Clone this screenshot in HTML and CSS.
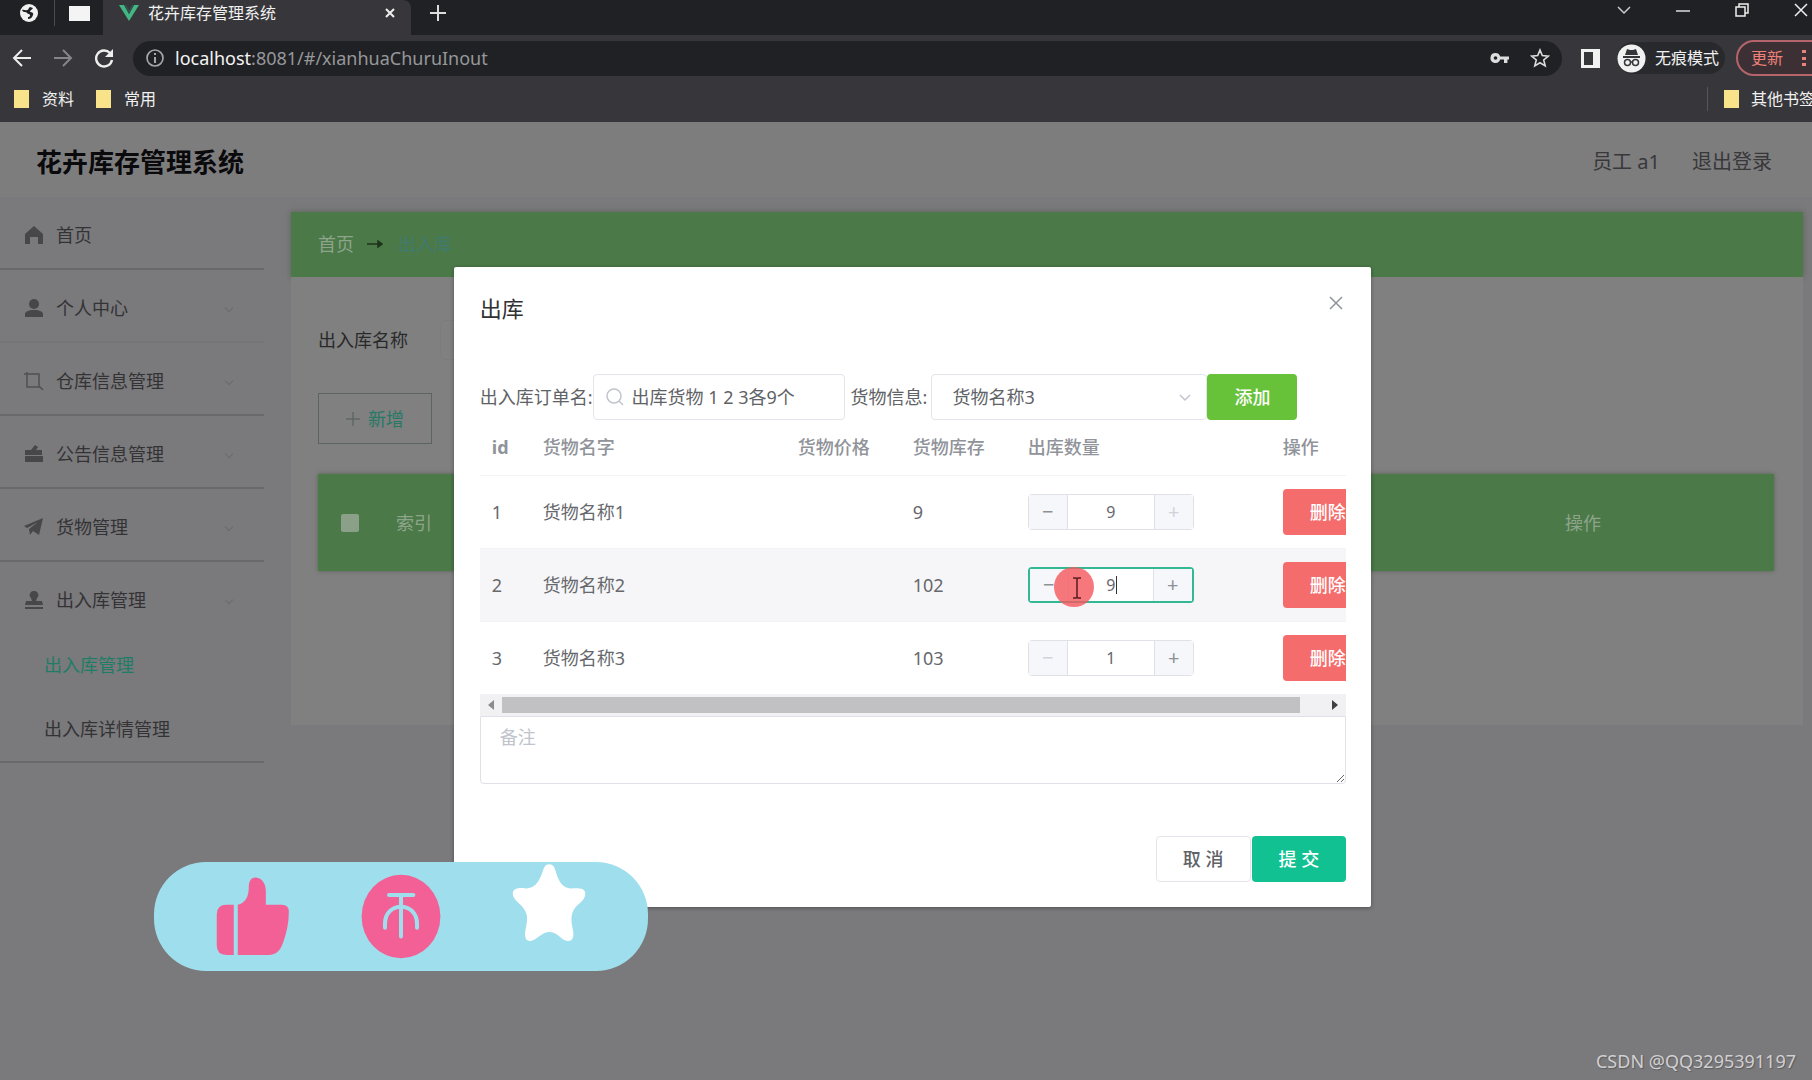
FILE: index.html
```html
<!DOCTYPE html>
<html lang="zh-CN">
<head>
<meta charset="utf-8">
<title>花卉库存管理系统</title>
<link rel="stylesheet" href="styles.css">
</head>
<body>
<div class="browser">
  <div class="tabstrip">
    <svg class="ic globe" width="20" height="20" viewBox="0 0 20 20"><circle cx="10" cy="10" r="9" fill="#f1f1f1"/><path d="M3 7c2-1 3 1 5 0 2 0 1-2 3-3l3 1c-1 2-3 2-3 4 2 0 4 1 3 3-1 3-3 4-5 4v-2c2 0 3-2 1-3-2 0-2-2-4-2-1 0-2 0-3-2z" fill="#202124"/></svg>
    <span class="divider"></span>
    <span class="window-thumb"></span>
    <div class="tab">
      <svg class="ic" width="20" height="16" viewBox="0 0 20 16"><path d="M0 0h5l5 9 5-9h5L10 16z" fill="#41b883"/><path d="M5 0h2l3 5 3-5h2l-5 9z" fill="#35504d"/></svg>
      <span class="tab-title">花卉库存管理系统</span>
      <button class="bare" aria-label="关闭标签页"><svg class="ic" width="10" height="10" viewBox="0 0 10 10"><path d="M1 1l8 8M9 1L1 9" stroke="#eee" stroke-width="2"/></svg></button>
    </div>
    <button class="bare new-tab" aria-label="新标签页"><svg class="ic" width="16" height="16" viewBox="0 0 16 16"><path d="M8 0v16M0 8h16" stroke="#ddd" stroke-width="2"/></svg></button>
    <div class="window-controls">
      <svg width="14" height="9" viewBox="0 0 14 9"><path d="M1 1l6 6 6-6" fill="none" stroke="#ccc" stroke-width="1.5"/></svg>
      <svg width="14" height="9" viewBox="0 0 14 9"><path d="M0 5h14" stroke="#ddd" stroke-width="1.5"/></svg>
      <svg width="14" height="14" viewBox="0 0 14 14"><path d="M1 4h9v9H1zM4 4V1h9v9h-3" fill="none" stroke="#eee" stroke-width="1.5"/></svg>
      <svg width="14" height="14" viewBox="0 0 14 14"><path d="M1 1l12 12M13 1L1 13" stroke="#eee" stroke-width="1.5"/></svg>
    </div>
  </div>
  <div class="toolbar">
    <button class="bare" aria-label="后退"><svg class="ic" width="20" height="18" viewBox="0 0 20 18"><path d="M19 9H2M10 1L2 9l8 8" fill="none" stroke="#eee" stroke-width="2"/></svg></button>
    <button class="bare" aria-label="前进"><svg class="ic" width="20" height="18" viewBox="0 0 20 18"><path d="M1 9h17M10 1l8 8-8 8" fill="none" stroke="#858689" stroke-width="2"/></svg></button>
    <button class="bare" aria-label="刷新"><svg class="ic" width="20" height="20" viewBox="0 0 20 20"><path d="M16 5a8 8 0 1 0 2 7" fill="none" stroke="#eee" stroke-width="2.4"/><path d="M19 1v8h-8z" fill="#eee"/></svg></button>
    <div class="omnibox">
      <svg width="20" height="20" viewBox="0 0 20 20"><circle cx="10" cy="10" r="8" fill="none" stroke="#a5a6a9" stroke-width="1.7"/><path d="M10 9v6M10 5v2" stroke="#a5a6a9" stroke-width="2"/></svg>
      <span class="url"><b>localhost</b>:8081/#/xianhuaChuruInout</span>
      <svg width="20" height="12" viewBox="0 0 20 12"><path d="M5.500 1a5 5 0 1 0 4.700 6.600H14V11h3.400V7.600H19V4.400h-8.800A5 5 0 0 0 5.500 1z" fill="#ddd"/><circle cx="5.500" cy="6" r="1.800" fill="#202124"/></svg>
      <svg width="20" height="20" viewBox="0 0 20 20"><path d="M10 2l2.300 5.600 6 .5-4.600 3.900 1.500 5.900L10 14.700 4.800 17.900 6.300 12 1.700 8.100l6-.5z" fill="none" stroke="#ddd" stroke-width="1.600"/></svg>
    </div>
    <svg class="ic side-panel" width="19" height="19" viewBox="0 0 19 19"><path d="M0 0h19v19H0z" fill="#f1f1f1"/><path d="M3 3h9v13H3z" fill="#35363a"/></svg>
    <div class="incognito">
      <svg width="29" height="29" viewBox="0 0 29 29"><circle cx="14.500" cy="14.500" r="14" fill="#f1f1f1"/><path d="M6 12h17v2H6zM10 5l3 1 3 0 3-1 2 6H8z" fill="#35363a"/><circle cx="10.500" cy="18.500" r="3" fill="none" stroke="#35363a" stroke-width="1.500"/><circle cx="18.500" cy="18.500" r="3" fill="none" stroke="#35363a" stroke-width="1.500"/><path d="M13 18h3" stroke="#35363a" stroke-width="1.500"/></svg>
      <span>无痕模式</span>
    </div>
    <button class="update"><span>更新</span><svg width="4" height="18" viewBox="0 0 4 18"><path d="M0 1h4v3H0zM0 8h4v3H0zM0 14h4v3H0z" fill="#e8837c"/></svg></button>
  </div>
  <div class="bookmarks">
    <a href="#"><span class="folder"></span>资料</a>
    <a href="#"><span class="folder"></span>常用</a>
    <a href="#" class="other"><span class="folder"></span>其他书签</a>
  </div>
</div>

<div class="app">
  <header class="app-header">
    <h1>花卉库存管理系统</h1>
    <span>员工 a1</span>
    <a href="#">退出登录</a>
  </header>
  <div class="app-body">
    <nav class="sidebar">
      <a class="item" href="#"><svg width="20" height="18" viewBox="0 0 20 18"><path d="M10 0l9 8v10h-5v-7H6v7H1V8z" fill="#47474a"/></svg><span>首页</span></a>
      <a class="item soft" href="#"><svg width="20" height="18" viewBox="0 0 20 18"><circle cx="10" cy="5" r="5" fill="#47474a"/><path d="M1 18v-3c0-2 3-4 9-4s9 2 9 4v3z" fill="#47474a"/></svg><span>个人中心</span><i></i></a>
      <a class="item" href="#"><svg width="20" height="18" viewBox="0 0 20 18"><path d="M0 2h15v13M3 0v15h13l3 3" fill="none" stroke="#505053" stroke-width="1.500"/></svg><span>仓库信息管理</span><i></i></a>
      <a class="item" href="#"><svg width="20" height="18" viewBox="0 0 20 18"><path d="M1 5h6l4-5 3 2-2 3h6v5H1zM1 11h18v6H1z" fill="#47474a"/></svg><span>公告信息管理</span><i></i></a>
      <a class="item" href="#"><svg width="20" height="18" viewBox="0 0 20 18"><path d="M0 8L19 0l-4 17-6-4-3 4-1-6 9-7-11 6z" fill="#47474a"/></svg><span>货物管理</span><i></i></a>
      <a class="item open" href="#"><svg width="20" height="18" viewBox="0 0 20 18"><path d="M10 0a4 4 0 0 1 3 7l-1 3h6l1 4H1l1-4h6L7 7a4 4 0 0 1 3-7zM1 16h18v2H1z" fill="#47474a"/></svg><span>出入库管理</span><i></i></a>
      <div class="submenu">
        <a class="active" href="#">出入库管理</a>
        <a href="#">出入库详情管理</a>
      </div>
    </nav>
    <main class="content">
      <div class="crumbs"><a href="#">首页</a><svg width="16" height="8" viewBox="0 0 16 8"><path d="M0 4h14M11 1l4 3-4 3z" stroke="#1c351b" stroke-width="1.500" fill="#1c351b"/></svg><span>出入库</span></div>
      <section class="panel">
        <label class="search">出入库名称<input type="text"></label>
        <button class="add"><svg width="14" height="14" viewBox="0 0 14 14"><path d="M7 0v14M0 7h14" stroke="#5f6866" stroke-width="1.500"/></svg>新增</button>
        <table class="list">
          <thead><tr><th class="c-check"><input type="checkbox" aria-label="全选"></th><th class="c-index">索引</th><th></th><th class="c-op">操作</th></tr></thead>
        </table>
      </section>
    </main>
  </div>
</div>

<div class="modal-layer">
  <div class="dialog" role="dialog" aria-labelledby="dlg-title">
    <div class="dialog-head">
      <h2 id="dlg-title">出库</h2>
      <button class="bare" aria-label="关闭"><svg class="ic" width="14" height="14" viewBox="0 0 14 14"><path d="M1 1l12 12M13 1L1 13" stroke="#909399" stroke-width="1.500"/></svg></button>
    </div>
    <div class="form-row">
      <label for="order">出入库订单名:</label>
      <div class="field order">
        <svg width="18" height="18" viewBox="0 0 18 18"><circle cx="8" cy="8" r="7" fill="none" stroke="#c0c4cc" stroke-width="1.500"/><path d="M13 13l4 4" stroke="#c0c4cc" stroke-width="1.500"/></svg>
        <input id="order" type="text" value="出库货物 1 2 3各9个">
      </div>
      <label for="goods">货物信息:</label>
      <div class="field goods">
        <select id="goods"><option>货物名称3</option></select>
        <svg width="12" height="8" viewBox="0 0 12 8"><path d="M1 1l5 5 5-5" fill="none" stroke="#c0c4cc" stroke-width="1.500"/></svg>
      </div>
      <button class="btn success">添加</button>
    </div>
    <div class="table-wrap">
      <table class="goods-table">
        <colgroup><col class="w-id"><col class="w-name"><col class="w-num"><col class="w-num"><col class="w-qty"><col class="w-op"></colgroup>
        <thead><tr><th>id</th><th>货物名字</th><th>货物价格</th><th>货物库存</th><th>出库数量</th><th>操作</th></tr></thead>
        <tbody>
          <tr><td>1</td><td>货物名称1</td><td></td><td>9</td>
            <td><div class="stepper"><button aria-label="减少">−</button><input type="text" value="9" aria-label="出库数量"><button class="off" aria-label="增加">+</button></div></td>
            <td><button class="btn danger">删除</button></td></tr>
          <tr class="hover"><td>2</td><td>货物名称2</td><td></td><td>102</td>
            <td><div class="stepper focus"><button aria-label="减少">−</button><input type="text" value="9" aria-label="出库数量"><button aria-label="增加">+</button>
              <svg class="pointer" width="40" height="40" viewBox="0 0 40 40"><circle cx="20" cy="20" r="20" fill="#f5565b" fill-opacity=".8"/><path d="M19 11h3l1 1 1-1h3M19 31h3l1-1 1 1h3M23 12v18" fill="none" stroke="#5a1c20" stroke-width="1.500"/></svg></div></td>
            <td><button class="btn danger">删除</button></td></tr>
          <tr><td>3</td><td>货物名称3</td><td></td><td>103</td>
            <td><div class="stepper"><button class="off" aria-label="减少">−</button><input type="text" value="1" aria-label="出库数量"><button aria-label="增加">+</button></div></td>
            <td><button class="btn danger">删除</button></td></tr>
        </tbody>
      </table>
    </div>
    <div class="scrollbar">
      <svg width="6" height="10" viewBox="0 0 6 10"><path d="M6 0v10L0 5z" fill="#8b8b8b"/></svg>
      <div class="track"><div class="thumb"></div></div>
      <svg width="6" height="10" viewBox="0 0 6 10"><path d="M0 0v10l6-5z" fill="#404040"/></svg>
    </div>
    <textarea placeholder="备注" aria-label="备注"></textarea>
    <div class="dialog-foot">
      <button class="btn plain">取 消</button>
      <button class="btn primary">提 交</button>
    </div>
  </div>
</div>

<svg class="like-bar" width="494" height="109" viewBox="43 37 1480 326" preserveAspectRatio="none">
  <rect x="43" y="37" width="1480" height="326" rx="156" fill="#9fdeec"/>
  <path d="M260 165h22v150h-22q-29 0-29-29v-92q0-29 29-29zM294 165c22-6 33-23 33-52 0-18 6-30 20-30s31 12 31 42v40h48q21 0 21 21c0 30-6 62-16 88-8 26-20 41-46 41h-91z" fill="#f26096"/>
  <ellipse cx="783" cy="200" rx="118" ry="125" fill="#f26096"/>
  <path d="M747 136h73M783 136v124M735 234v-12c0-68 96-68 96 0v12" fill="none" stroke="#9fdeec" stroke-width="12" stroke-linecap="round"/>
  <path d="M1227 44c12 0 16 8 21 26 8 28 22 46 44 46 26-2 43 0 43 15 0 14-8 22-22 34-22 20-22 42-16 70 5 20 4 38-14 38-10 0-18-6-26-14-22-18-38-16-60 0-10 8-18 14-27 14-16 0-18-16-13-38 6-28 8-46-16-70-12-12-23-20-23-34 0-14 16-18 40-15 24 0 38-18 48-46 6-18 9-26 21-26z" fill="#fff"/>
</svg>
<div class="watermark">CSDN @QQ3295391197</div>
</body>
</html>
```
FILE: styles.css
```css
* { box-sizing: border-box; }
body {
  margin: 0;
  min-height: 100vh;
  display: flex;
  flex-direction: column;
  position: relative;
  overflow: hidden;
  background: #7a797b;
  color: #2c2c2e;
  font: 18px/24px "Noto Sans", "Noto Sans CJK SC", sans-serif;
}
button, input, select, textarea { font: inherit; color: inherit; margin: 0; }
a { color: inherit; text-decoration: none; }
svg { flex: none; display: block; }
.bare { border: 0; background: none; padding: 0; }

/* browser frame */
.browser { background: #37373b; color: #f1f1f1; font-size: 16px; height: 122px; }
.tabstrip { display: flex; align-items: center; height: 35px; padding: 0 4px 9px 19px; background: #202124; }
.divider { width: 1px; height: 26px; margin-left: 15px; background: #4a4b4e; }
.window-thumb { width: 21px; height: 15px; margin: 0 13px 0 14px; background: #f4f4f4; }
.tab { display: flex; align-items: center; width: 308px; height: 35px; margin-bottom: -9px; padding: 0 16px 9px 16px; background: #37373b; border-radius: 0 8px 0 0; }
.tab-title { flex: 1; padding-left: 9px; }
.new-tab { margin-left: 19px; }
.window-controls { display: flex; align-items: center; gap: 45px; margin: -6px 0 0 auto; }
.toolbar { display: flex; align-items: center; height: 46px; padding-left: 12px; gap: 21px; }
.omnibox { flex: 1; display: flex; align-items: center; gap: 20px; height: 35px; margin-left: -2px; padding: 0 12px; border-radius: 18px; background: #202124; }
.url { flex: 1; margin-left: -10px; font-size: 18px; color: #96979a; }
.url b { font-weight: 400; color: #f4f4f4; }
.side-panel { margin-left: -2px; }
.incognito { display: flex; align-items: center; gap: 9px; height: 32px; margin-left: -4px; padding-right: 6px; border-radius: 16px; background: #28292d; }
.update { display: flex; align-items: center; justify-content: space-between; width: 94px; height: 36px; margin: 0 -18px 0 -10px; padding: 0 22px 0 13px; border: 2px solid #b5646c; border-radius: 18px; background: #3c3034; color: #ee8079; }
.bookmarks { display: flex; align-items: center; height: 36px; padding-left: 14px; gap: 22px; }
.bookmarks a { display: flex; align-items: center; gap: 13px; white-space: nowrap; }
.folder { width: 15px; height: 18px; background: #f8e28a; }
.bookmarks .other { margin: 0 -3px 0 auto; padding-left: 16px; gap: 12px; border-left: 1px solid #56575b; }

/* application */
.app { flex: 1; }
.app-header { display: flex; align-items: center; height: 75px; padding: 5px 40px 0 36px; background: #7d7d7e; font-size: 20px; color: #38383a; gap: 32px; }
.app-header h1 { flex: 1; margin: 0; font-size: 26px; line-height: 36px; color: #0a0a0c; }
.app-body { display: flex; gap: 27px; padding-right: 9px; }
.sidebar { width: 264px; }
.item { display: flex; align-items: center; gap: 12px; height: 73px; padding: 4px 28px 0 24px; border-bottom: 2px solid #69696b; color: #333336; }
.item.soft { border-color: #757577; }
.item.open { height: 71px; border: 0; }
.item span { flex: 1; }
.item i { width: 6px; height: 6px; margin-right: 4px; border: solid #6b6b6e; border-width: 0 1px 1px 0; transform: rotate(45deg); }
.submenu { border-bottom: 2px solid #69696b; }
.submenu a { display: block; padding: 20px 0 20px 44px; color: #333336; }
.submenu .active { color: #1f7d67; }
.content { flex: 1; padding-top: 15px; }
.crumbs { display: flex; align-items: center; gap: 13px; height: 65px; padding: 0 0 2px 27px; background: #4b7948; color: #417a70; box-shadow: 0 0 6px #5a635a; }
.crumbs a { color: #8ea58c; }
.crumbs span { margin-left: 2px; }
.panel { padding: 43px 29px 154px 27px; background: #7f807f; }
.search { display: flex; align-items: center; gap: 32px; height: 40px; color: #29292b; }
.search input { width: 200px; height: 40px; border: 1px solid #7b7c7b; border-radius: 4px; background: none; }
.add { display: flex; align-items: center; justify-content: center; gap: 8px; width: 114px; height: 51px; margin: 33px 0 30px; padding: 0; border: 1px solid #5c6462; background: none; color: #287867; }
.list { width: 100%; border-collapse: collapse; background: #4b7948; box-shadow: 0 0 4px #5a635a; }
.list th { height: 97px; padding: 0; font-weight: 400; color: #8ea58c; }
.list .c-check { width: 64px; }
.list .c-check input { appearance: none; display: block; width: 18px; height: 18px; margin: 0 auto; border-radius: 2px; background: #8ba089; }
.list .c-index { width: 64px; }
.list .c-op { width: 382px; }

/* dialog */
.modal-layer { position: absolute; inset: 267px 0 auto; padding-left: 13px; }
.dialog { width: 51%; margin: 0 auto; padding: 25px 25px 25px 26px; background: #fff; border-radius: 2px; box-shadow: 0 1px 4px rgba(0, 0, 0, .35); color: #606266; }
.dialog-head { display: flex; align-items: center; justify-content: space-between; height: 32px; padding-right: 3px; }
.dialog-head h2 { margin: 0; font-size: 22px; line-height: 32px; font-weight: 400; color: #303133; }
.dialog-head button { margin-top: -10px; }
.form-row { display: flex; align-items: center; margin-top: 50px; white-space: nowrap; }
.field { display: flex; align-items: center; height: 46px; border: 1px solid #e4e5ea; border-radius: 4px; }
.order { width: 252px; padding-left: 12px; gap: 8px; margin-right: 6px; }
.order input { width: 100%; min-width: 0; padding: 0; border: 0; outline: 0; background: none; }
.goods { position: relative; width: 276px; margin-left: 4px; }
.goods select { appearance: none; width: 100%; height: 44px; padding: 0 36px 0 20px; border: 0; background: none; }
.goods svg { position: absolute; right: 15px; top: 19px; }
.btn { height: 46px; padding: 0 27px; border: 0; border-radius: 4px; color: #fff; font-weight: 500; white-space: nowrap; }
.success { background: #67c23a; }
.danger { background: #f56c6c; }
.primary { background: #12c192; }
.plain { padding: 0 26px; border: 1px solid #e4e5ea; background: #fff; color: #606266; }
.table-wrap { overflow: hidden; }
.goods-table { width: 934px; table-layout: fixed; border-collapse: collapse; text-align: left; }
.w-id { width: 51px; }
.w-name { width: 255px; }
.w-num { width: 115px; }
.w-qty { width: 255px; }
.goods-table th, .goods-table td { padding: 0 0 0 12px; border-bottom: 1px solid #f2f3f6; }
.goods-table th { height: 55px; color: #909399; font-weight: 500; }
.goods-table th:first-child { font-weight: 700; }
.goods-table td { height: 73px; color: #66686c; }
.hover { background: #f6f6f8; }
.stepper { position: relative; display: flex; width: 166px; height: 36px; border: 1px solid #dfe1e6; border-radius: 4px; background: #fff; font-size: 16px; }
.stepper button { width: 38px; padding: 0; border: 0; background: #f5f7fa; font-size: 20px; line-height: 32px; color: #8d9095; }
.stepper .off { color: #d0d3d9; }
.stepper input { flex: 1; min-width: 0; padding: 0; border: solid #dfe1e6; border-width: 0 1px; background: #fff; text-align: center; outline: 0; }
.focus { border: 2px solid #34b894; }
.focus::after { content: ""; position: absolute; left: 86px; top: 7px; width: 1px; height: 18px; background: #303133; }
.pointer { position: absolute; left: 24px; top: -2px; }
.scrollbar { display: flex; align-items: center; height: 21px; padding: 0 8px; gap: 8px; background: #f1f1f3; }
.track { flex: 1; }
.thumb { width: 97%; height: 16px; background: #c1c1c3; }
textarea { display: block; width: 100%; height: 68px; padding: 8px 19px; border: 1px solid #dfe1e6; border-radius: 0 0 4px 4px; outline: 0; resize: vertical; }
textarea::placeholder { color: #c0c4cc; }
.dialog-foot { display: flex; justify-content: flex-end; gap: 1px; margin-top: 52px; }

/* overlays */
.like-bar { position: absolute; left: 154px; top: 862px; }
.watermark { position: absolute; right: 16px; bottom: 7px; color: #d0d0d2; text-shadow: 1px 1px 1px #5c5b5e; }
```
